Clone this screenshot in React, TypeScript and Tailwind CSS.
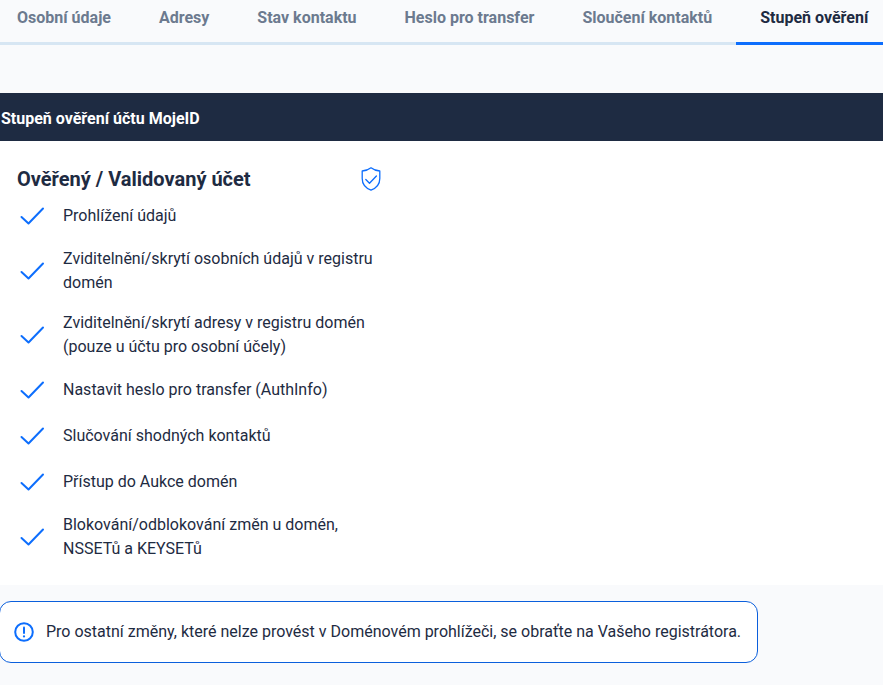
import React from "react";

const tabs = ["Osobní údaje", "Adresy", "Stav kontaktu", "Heslo pro transfer", "Sloučení kontaktů"];

const items: React.ReactNode[] = [
  "Prohlížení údajů",
  "Zviditelnění/skrytí osobních údajů v registru domén",
  "Zviditelnění/skrytí adresy v registru domén (pouze u účtu pro osobní účely)",
  "Nastavit heslo pro transfer (AuthInfo)",
  "Slučování shodných kontaktů",
  "Přístup do Aukce domén",
  "Blokování/odblokování změn u domén, NSSETů a KEYSETů",
];

function Check() {
  return (
    <svg viewBox="0 0 30 30" className="w-[30px] h-[30px] shrink-0 text-[#0d6efd]" fill="none" stroke="currentColor" strokeWidth="2" strokeLinecap="round" strokeLinejoin="round">
      <path d="M4.5 16 L11.5 22.5 L26 7.5" />
    </svg>
  );
}

export default function App() {
  return (
    <div className="min-h-[685px] w-[883px] overflow-hidden bg-[#f9fafc] font-[Roboto,sans-serif] text-[#1e2b42]">
      <div className="flex h-[45px] border-b-[3px] border-[#d7e6f3] overflow-visible">
        <div className="flex -ml-[7px] shrink-0">
          {tabs.map((t) => (
            <div key={t} className="px-6 h-[45px] pt-[8px] text-[16px] leading-[20px] font-bold text-[#6c7a8f] whitespace-nowrap">{t}</div>
          ))}
          <div className="px-6 h-[45px] pt-[8px] text-[16px] leading-[20px] font-bold text-[#1e2b42] whitespace-nowrap border-b-[3px] border-[#0d6efd]">Stupeň ověření</div>
        </div>
      </div>
      <div className="mt-[48px] h-[48px] bg-[#1e2b42] flex items-center pl-px pt-[4px] text-[16px] font-bold text-white">
        Stupeň ověření účtu MojeID
      </div>
      <div className="bg-white pt-[24px] pb-[24px] pl-[17px]">
        <div className="w-[366px] flex items-center justify-between h-[28px]">
          <h2 className="text-[20px] leading-[28px] font-bold text-[#1e2b42]">Ověřený / Validovaný účet</h2>
          <svg viewBox="0 0 24 24" className="w-[24px] h-[24px] text-[#0d6efd]" fill="none" stroke="currentColor" strokeWidth="1.3" strokeLinejoin="round" strokeLinecap="round">
            <path d="M12 0.8 C14.5 2.8 17.5 3.8 20.8 4 V11.5 C20.8 17 17.5 21 12 23.2 C6.5 21 3.2 17 3.2 11.5 V4 C6.5 3.8 9.5 2.8 12 0.8 Z" />
            <path d="M6.8 12.5 L10.5 16.3 L17.4 9" />
          </svg>
        </div>
        <ul className="mt-[8px] flex flex-col gap-4 w-[366px]">
          {items.map((t, i) => (
            <li key={i} className="flex items-center gap-[16px] text-[16px] leading-[24px] text-[#1e2b42]">
              <Check />
              <span>{t}</span>
            </li>
          ))}
        </ul>
      </div>
      <div className="mt-[16px] w-[759px] -ml-px h-[62px] bg-white border border-[#0b5fdc] rounded-[12px] flex items-center pl-[14px] gap-[12px] text-[16px] text-[#1e2b42]">
        <svg viewBox="0 0 20 20" className="w-[20px] h-[20px] shrink-0 text-[#0d6efd]" fill="none" stroke="currentColor" strokeWidth="2" strokeLinecap="round">
          <circle cx="10" cy="10" r="8.8" />
          <path d="M10 5.5 V11" />
          <path d="M10 14.3 V14.4" strokeWidth="2.2" />
        </svg>
        <span>Pro ostatní změny, které nelze provést v Doménovém prohlížeči, se obraťte na Vašeho registrátora.</span>
      </div>
    </div>
  );
}
